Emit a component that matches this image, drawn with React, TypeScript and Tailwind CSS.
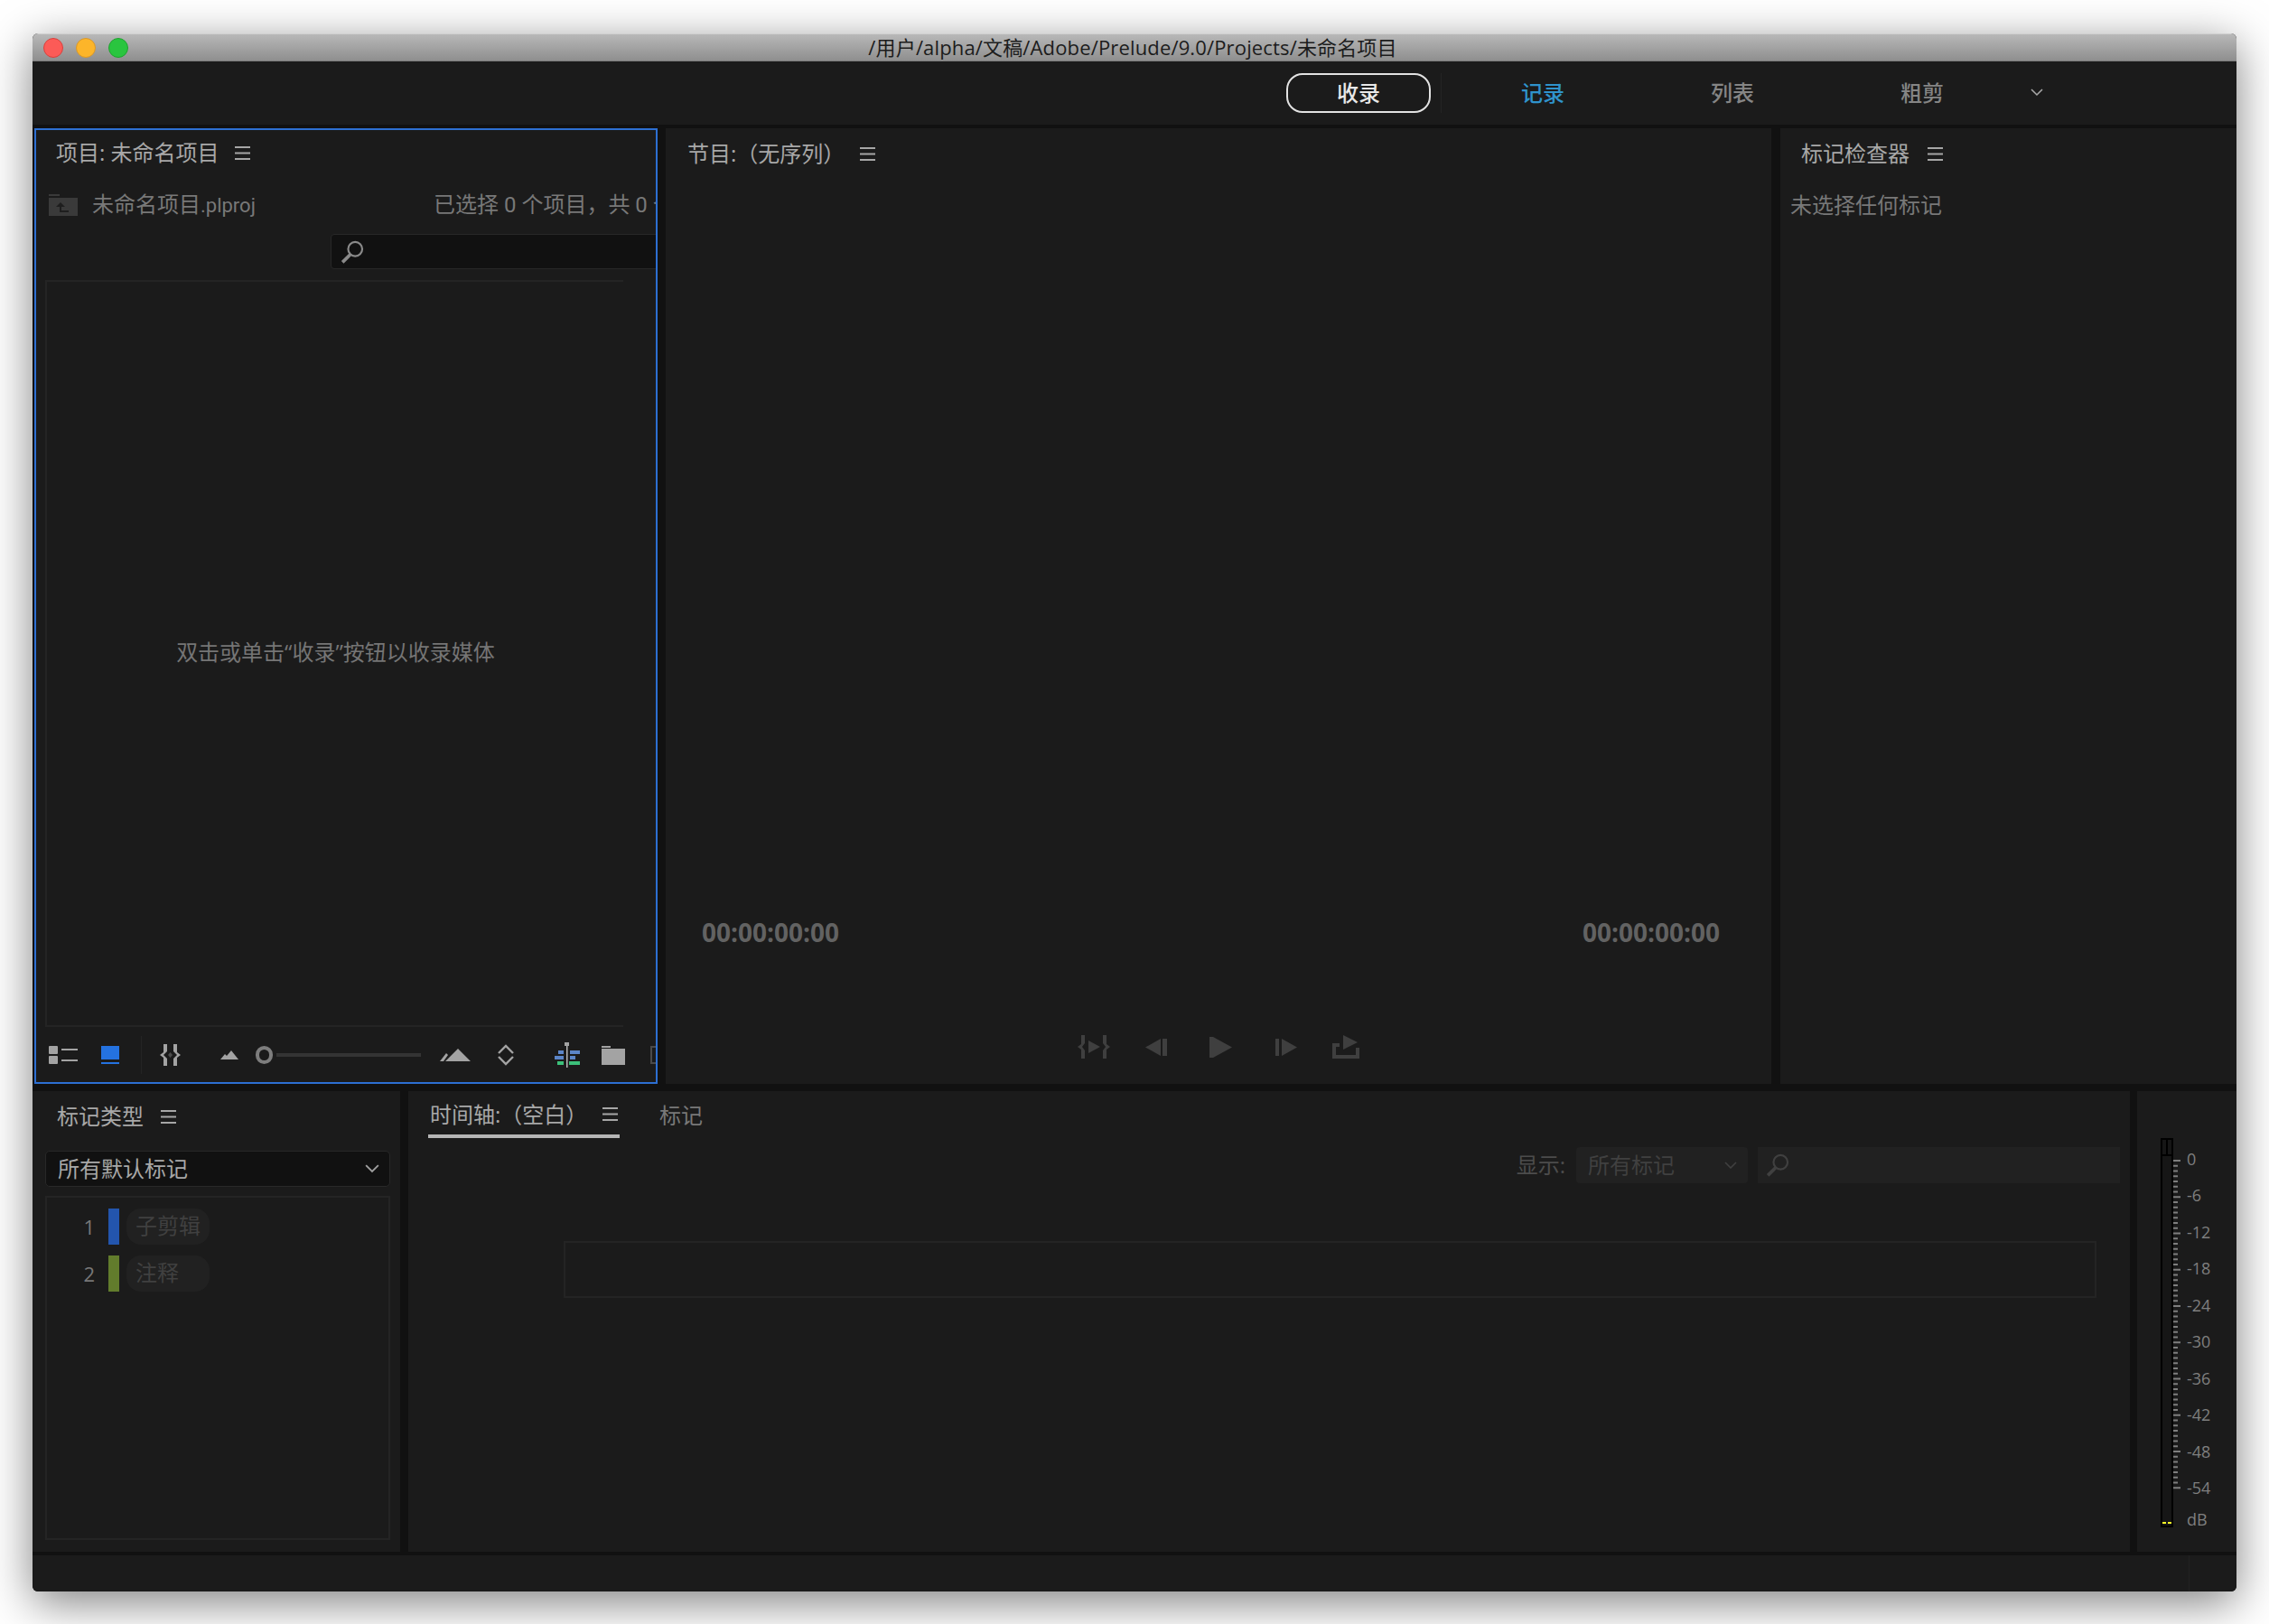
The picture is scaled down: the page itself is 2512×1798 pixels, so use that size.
import React from 'react';

const CJK = "font-['Open_Sans','Noto_Sans_CJK_SC',sans-serif]";

function MenuIcon({ className = '' }: { className?: string }) {
  return (
    <svg className={className} width="17" height="15" viewBox="0 0 17 15">
      <path d="M0 1h17M0 7.5h17M0 14h17" stroke="#a6a6a6" strokeWidth="2" />
    </svg>
  );
}

function SearchIcon({ color }: { color: string }) {
  return (
    <svg width="26" height="26" viewBox="0 0 24 24" fill="none">
      <circle cx="15" cy="9" r="7.2" stroke={color} strokeWidth="2" />
      <path d="M10 14.5L2 22.5" stroke={color} strokeWidth="3.4" />
    </svg>
  );
}

function Chevron({ color, size = 14 }: { color: string; size?: number }) {
  return (
    <svg width={size} height={size * 0.6} viewBox="0 0 14 8.4" fill="none">
      <path d="M1 1l6 6 6-6" stroke={color} strokeWidth="1.6" />
    </svg>
  );
}

function PanelTitle({ children }: { children: React.ReactNode }) {
  return <span className="text-[24px] leading-[32px] text-[#a8a8a8] whitespace-nowrap">{children}</span>;
}

function ProjectToolbar() {
  return (
    <div className="flex-1 flex items-center pt-[1px] [&>*]:shrink-0">
      <svg className="ml-[14px]" width="32" height="20" viewBox="0 0 32 20" fill="#a3a3a3">
        <rect x="0" y="0" width="10" height="9" rx="1" />
        <rect x="0" y="11" width="10" height="9" rx="1" />
        <rect x="14" y="3" width="18" height="2" />
        <rect x="14" y="15" width="18" height="2" />
      </svg>
      <svg className="ml-[26px]" width="20" height="20" viewBox="0 0 20 20" fill="#2472e0">
        <rect x="0" y="0" width="20" height="15" />
        <rect x="0" y="18" width="20" height="2" />
      </svg>
      <div className="ml-[24px] w-px h-[42px] bg-[#242424]" />
      <svg className="ml-[20px]" width="23" height="24" viewBox="0 0 23 24" fill="#a3a3a3">
        <path d="M4 0h4v8L4 12l4 4v8H4v-9L0 12l4-3zM15 0h4v9l4 3-4 3v9h-4v-8l4-4-4-4z" />
        <path d="M9 12l2.5-3v6zM14 12l-2.5-3v6z" fill="#4d4d4d" />
      </svg>
      <svg className="ml-[44px]" width="20" height="10" viewBox="0 0 20 10" fill="#a3a3a3">
        <path d="M0 10l5-6 2 2 5-6 8 10z" />
      </svg>
      <div className="ml-[19px] w-[19px] h-[20px] rounded-full border-[4px] border-[#7d7d7d]" />
      <div className="ml-[4px] w-[160px] h-[4px] bg-[#343434]" />
      <svg className="ml-[21px]" width="34" height="14" viewBox="0 0 34 14" fill="#a3a3a3">
        <path d="M0 14l7-9 2 2-5 7zM6 14L20 0l14 14z" />
      </svg>
      <svg className="ml-[29px]" width="20" height="24" viewBox="0 0 20 24" fill="none" stroke="#a3a3a3" strokeWidth="2.4">
        <path d="M2 10l8-8 8 8M2 14l8 8 8-8" />
      </svg>
      <svg className="ml-[44px]" width="29" height="28" viewBox="0 0 29 28">
        <rect x="4" y="9" width="6" height="4" fill="#5b85c8" />
        <rect x="17" y="9" width="11" height="4" fill="#5b85c8" />
        <rect x="0" y="15" width="10" height="4" fill="#5b85c8" />
        <rect x="17" y="15" width="6" height="4" fill="#5b85c8" />
        <rect x="3" y="21" width="7" height="4" fill="#3cc07a" />
        <rect x="16" y="21" width="12" height="4" fill="#3cc07a" />
        <rect x="13" y="4" width="1.5" height="24" fill="#b8b8b8" />
        <rect x="11" y="0" width="5" height="4" fill="#a3a3a3" />
      </svg>
      <svg className="ml-[23px]" width="26" height="21" viewBox="0 0 26 21" fill="#a3a3a3">
        <rect x="0" y="0" width="10" height="2" />
        <rect x="0" y="3" width="26" height="18" />
      </svg>
      <svg className="ml-[28px]" width="10" height="20" viewBox="0 0 10 20" fill="none" stroke="#4a4a4a" strokeWidth="2">
        <path d="M6 1H1v18h5" />
      </svg>
    </div>
  );
}

function ProjectPanel() {
  return (
    <div className="w-[690px] h-[1058px] shrink-0 border-2 border-[#2d6fd2] bg-[#1b1b1b] flex flex-col overflow-hidden">
      <div className="h-[50px] flex items-center pl-[22px]">
        <PanelTitle>项目: 未命名项目</PanelTitle>
        <MenuIcon className="ml-[17px]" />
      </div>
      <div className="mt-[13px] h-[40px] flex items-center text-[24px] text-[#787878] whitespace-nowrap font-['Roboto','Noto_Sans_CJK_SC',sans-serif]">
        <div className="w-[440px] shrink-0 flex items-center pl-[14px]">
          <svg width="32" height="24" viewBox="0 0 32 24" fill="#3a3a3a">
            <rect x="0" y="0" width="12" height="2" />
            <rect x="0" y="4" width="32" height="20" />
            <path d="M12 20v-6H8l5-5 5 5h-4v4h8v2z" fill="#1e1e1e" />
          </svg>
          <span className="ml-[16px]">未命名项目<span className="text-[22px]">.plproj</span></span>
        </div>
        <span>{'已选择 0 个项目\uFF0C共 0 个'}</span>
      </div>
      <div className="mt-[12px] ml-[326px] h-[39px] w-[400px] shrink-0 rounded-l-[4px] border border-[#282828] bg-[#111111] flex items-center pl-[10px]">
        <SearchIcon color="#8a8a8a" />
      </div>
      <div className="mt-[12px] ml-[10px] w-[640px] h-[827px] shrink-0 border-l-2 border-t-2 border-b-2 border-[#242424] flex items-center justify-center">
        <span className="text-[24px] text-[#757575] ml-[1px] -mt-[3px]">双击或单击“收录”按钮以收录媒体</span>
      </div>
      <ProjectToolbar />
    </div>
  );
}

function TransportControls() {
  return (
    <div className="h-[82px] flex items-center justify-center -ml-[1px]">
      <svg width="36" height="26" viewBox="0 0 36 26" fill="#3f3f3f">
        <path d="M4 0h4v9l-3 4 3 4v9H4V16l-4-3 4-3zM28 0h4v10l4 3-4 3v10h-4v-9l3-4-3-4z" />
        <path d="M12 6l13 7-13 7z" />
      </svg>
      <svg className="ml-[39px]" width="25" height="19" viewBox="0 0 25 19" fill="#3f3f3f">
        <path d="M0 9.5L17 0v19zM19 0h5v19h-5z" />
      </svg>
      <svg className="ml-[46px]" width="25" height="23" viewBox="0 0 25 23" fill="#3f3f3f">
        <path d="M0 0h4l21 11.5L4 23H0z" />
      </svg>
      <svg className="ml-[47px]" width="25" height="19" viewBox="0 0 25 19" fill="#3f3f3f">
        <path d="M25 9.5L8 0v19zM1 0h4v19H1z" />
      </svg>
      <svg className="ml-[39px]" width="30" height="26" viewBox="0 0 30 26" fill="#3f3f3f">
        <path d="M0 9h8v4H4v9h22v-8h4v12H0z" />
        <path d="M12 0l16 8-16 8z" />
      </svg>
    </div>
  );
}

function ProgramPanel() {
  return (
    <div className="w-[1224px] shrink-0 ml-[9px] bg-[#1b1b1b] flex flex-col">
      <div className="h-[56px] flex items-center pl-[24px]">
        <PanelTitle>节目:（无序列）</PanelTitle>
        <MenuIcon className="ml-[17px]" />
      </div>
      <div className="flex-1" />
      <div className="h-[40px] pl-[40px] pr-[57px] flex items-center justify-between text-[28px] font-bold text-[#626262]">
        <span>00:00:00:00</span>
        <span>00:00:00:00</span>
      </div>
      <div className="h-[66px]" />
      <TransportControls />
    </div>
  );
}

function InspectorPanel() {
  return (
    <div className="flex-1 ml-[10px] bg-[#1b1b1b]">
      <div className="h-[56px] flex items-center pl-[23px]">
        <PanelTitle>标记检查器</PanelTitle>
        <MenuIcon className="ml-[20px]" />
      </div>
      <div className="pl-[11px] mt-[9px] text-[24px] leading-[40px] text-[#787878]">未选择任何标记</div>
    </div>
  );
}

function MarkerRow({ n, color, label }: { n: number; color: string; label: string }) {
  return (
    <div className="h-[40px] flex items-center">
      <span className="w-[23px] ml-[30px] text-[22px] text-[#777777] text-right">{n}</span>
      <div className={`ml-[15px] w-[12px] h-[40px] ${color}`} />
      <div className="ml-[8px] w-[92px] h-[40px] rounded-[16px] bg-[#212121] pl-[10px] text-[24px] leading-[38px] text-[#404040]">{label}</div>
    </div>
  );
}

function MarkerTypes() {
  return (
    <div className="w-[407px] shrink-0 bg-[#1b1b1b] flex flex-col">
      <div className="h-[56px] flex items-center pl-[27px]">
        <PanelTitle>标记类型</PanelTitle>
        <MenuIcon className="ml-[19px]" />
      </div>
      <div className="mt-[10px] ml-[14px] w-[382px] h-[40px] shrink-0 rounded-[5px] border border-[#282828] bg-[#111111] flex items-center justify-between pl-[13px] pr-[11px]">
        <span className="text-[24px] leading-[36px] text-[#a8a8a8]">所有默认标记</span>
        <Chevron color="#a0a0a0" size={16} />
      </div>
      <div className="mt-[10px] ml-[14px] w-[382px] h-[381px] shrink-0 border-2 border-[#242424] flex flex-col gap-[12px] pt-[12px]">
        <MarkerRow n={1} color="bg-[#2355ad]" label="子剪辑" />
        <MarkerRow n={2} color="bg-[#627c2c]" label="注释" />
      </div>
    </div>
  );
}

function TimelinePanel() {
  return (
    <div className="w-[1906px] shrink-0 ml-[9px] bg-[#1b1b1b] flex flex-col">
      <div className="h-[52px] flex items-end ml-[22px]">
        <div className="h-[52px] w-[212px] border-b-4 border-[#b5b5b5] flex items-center pl-[2px] pt-[3px]">
          <PanelTitle>时间轴:（空白）</PanelTitle>
          <MenuIcon className="ml-[17px]" />
        </div>
        <div className="h-[52px] ml-[44px] flex items-center pt-[2px]">
          <span className="text-[24px] text-[#787878]">标记</span>
        </div>
      </div>
      <div className="mt-[10px] h-[40px] flex items-center justify-end pr-[11px]">
        <span className="text-[24px] text-[#4c4c4c]">显示:</span>
        <div className="ml-[12px] w-[190px] h-[40px] rounded-[4px] bg-[#212121] flex items-center justify-between pl-[13px] pr-[12px]">
          <span className="text-[24px] text-[#404040]">所有标记</span>
          <Chevron color="#404040" />
        </div>
        <div className="ml-[11px] w-[401px] h-[40px] bg-[#212121] flex items-center pl-[9px]">
          <SearchIcon color="#404040" />
        </div>
      </div>
      <div className="mt-[64px] ml-[172px] w-[1697px] h-[63px] border-2 border-[#242424]" />
    </div>
  );
}

const LEVELS = ['0', '-6', '-12', '-18', '-24', '-30', '-36', '-42', '-48', '-54'];

function MeterPanel() {
  const ticks: React.ReactNode[] = [];
  for (let i = 0; i < 64; i++) {
    const y = 24 + i * 5.75;
    ticks.push(<rect key={i} x="0" y={y} width={i % 7 === 0 ? 8 : 5} height="2" fill="#7e7e7e" />);
  }
  return (
    <div className="flex-1 ml-[8px] bg-[#1b1b1b] flex items-start pt-[52px] pl-[26px]">
      <div className="w-[14px] h-[431px] border-2 border-black bg-[#161616] flex flex-col">
        <div className="h-[18px] border-b-2 border-black flex justify-center">
          <div className="w-[2px] h-full bg-black" />
        </div>
        <div className="flex-1 flex items-end justify-center gap-[2px] pb-[2px]">
          <div className="w-[4px] h-[2px] bg-[#f6f627]" />
          <div className="w-[4px] h-[2px] bg-[#f6f627]" />
        </div>
      </div>
      <svg width="8" height="431" viewBox="0 0 8 431">{ticks}</svg>
      <div className="ml-[7px] mt-[3px] flex flex-col text-[18px] text-[#7f7f7f] font-['Open_Sans',sans-serif]">
        {LEVELS.map(l => (
          <div key={l} className="h-[40.5px] flex items-center">{l}</div>
        ))}
        <div className="h-[28px] flex items-center">dB</div>
      </div>
    </div>
  );
}

export default function App() {
  return (
    <div className={`w-[2512px] h-[1798px] bg-white pt-[37px] pl-[36px] overflow-hidden ${CJK}`}>
      <div className="w-[2440px] h-[1725px] rounded-[6px] overflow-hidden bg-[#111111] flex flex-col shadow-[0_12px_50px_rgba(0,0,0,0.5)]">
        <div className="h-[31px] shrink-0 bg-gradient-to-b from-[#b8b8b8] to-[#8f8f8f] border-b border-[#7c7c7c] border-t border-t-[#d0d0d0] flex items-center">
          <div className="flex items-center gap-[14px] pl-[12px]">
            <div className="w-[22px] h-[22px] rounded-full bg-[#fc5b57] border border-[#d9413d]" />
            <div className="w-[22px] h-[22px] rounded-full bg-[#fcb52a] border border-[#d9982a]" />
            <div className="w-[22px] h-[22px] rounded-full bg-[#2ac53f] border border-[#1fa32f]" />
          </div>
          <span className="flex-1 text-center text-[22px] leading-[28px] tracking-[0.15px] text-[#1c1c1c] pr-[110px] pb-[2px] whitespace-nowrap">/用户/alpha/文稿/Adobe/Prelude/9.0/Projects/未命名项目</span>
        </div>
        <div className="h-[70px] shrink-0 bg-[#1b1b1b] flex items-center pl-[1388px] pb-[1px] text-[24px] font-medium whitespace-nowrap">
          <div className="w-[160px] h-[44px] rounded-[18px] border-2 border-[#e2e2e2] text-[#e8e8e8] flex items-center justify-center">收录</div>
          <div className="ml-[11px] w-px h-[44px] bg-[#242424]" />
          <span className="ml-[88px] text-[#2f93cc]">记录</span>
          <span className="ml-[162px] text-[#858585]">列表</span>
          <span className="ml-[162px] text-[#858585]">粗剪</span>
          <div className="ml-[96px]"><Chevron color="#a8a8a8" /></div>
        </div>
        <div className="mt-[4px] h-[1058px] shrink-0 flex pl-[2px]">
          <ProjectPanel />
          <ProgramPanel />
          <InspectorPanel />
        </div>
        <div className="mt-[8px] h-[510px] shrink-0 flex">
          <MarkerTypes />
          <TimelinePanel />
          <MeterPanel />
        </div>
        <div className="mt-[4px] flex-1 bg-[#1b1b1b] flex justify-end pr-[52px]">
          <div className="w-px h-full bg-[#222222]" />
        </div>
      </div>
    </div>
  );
}
